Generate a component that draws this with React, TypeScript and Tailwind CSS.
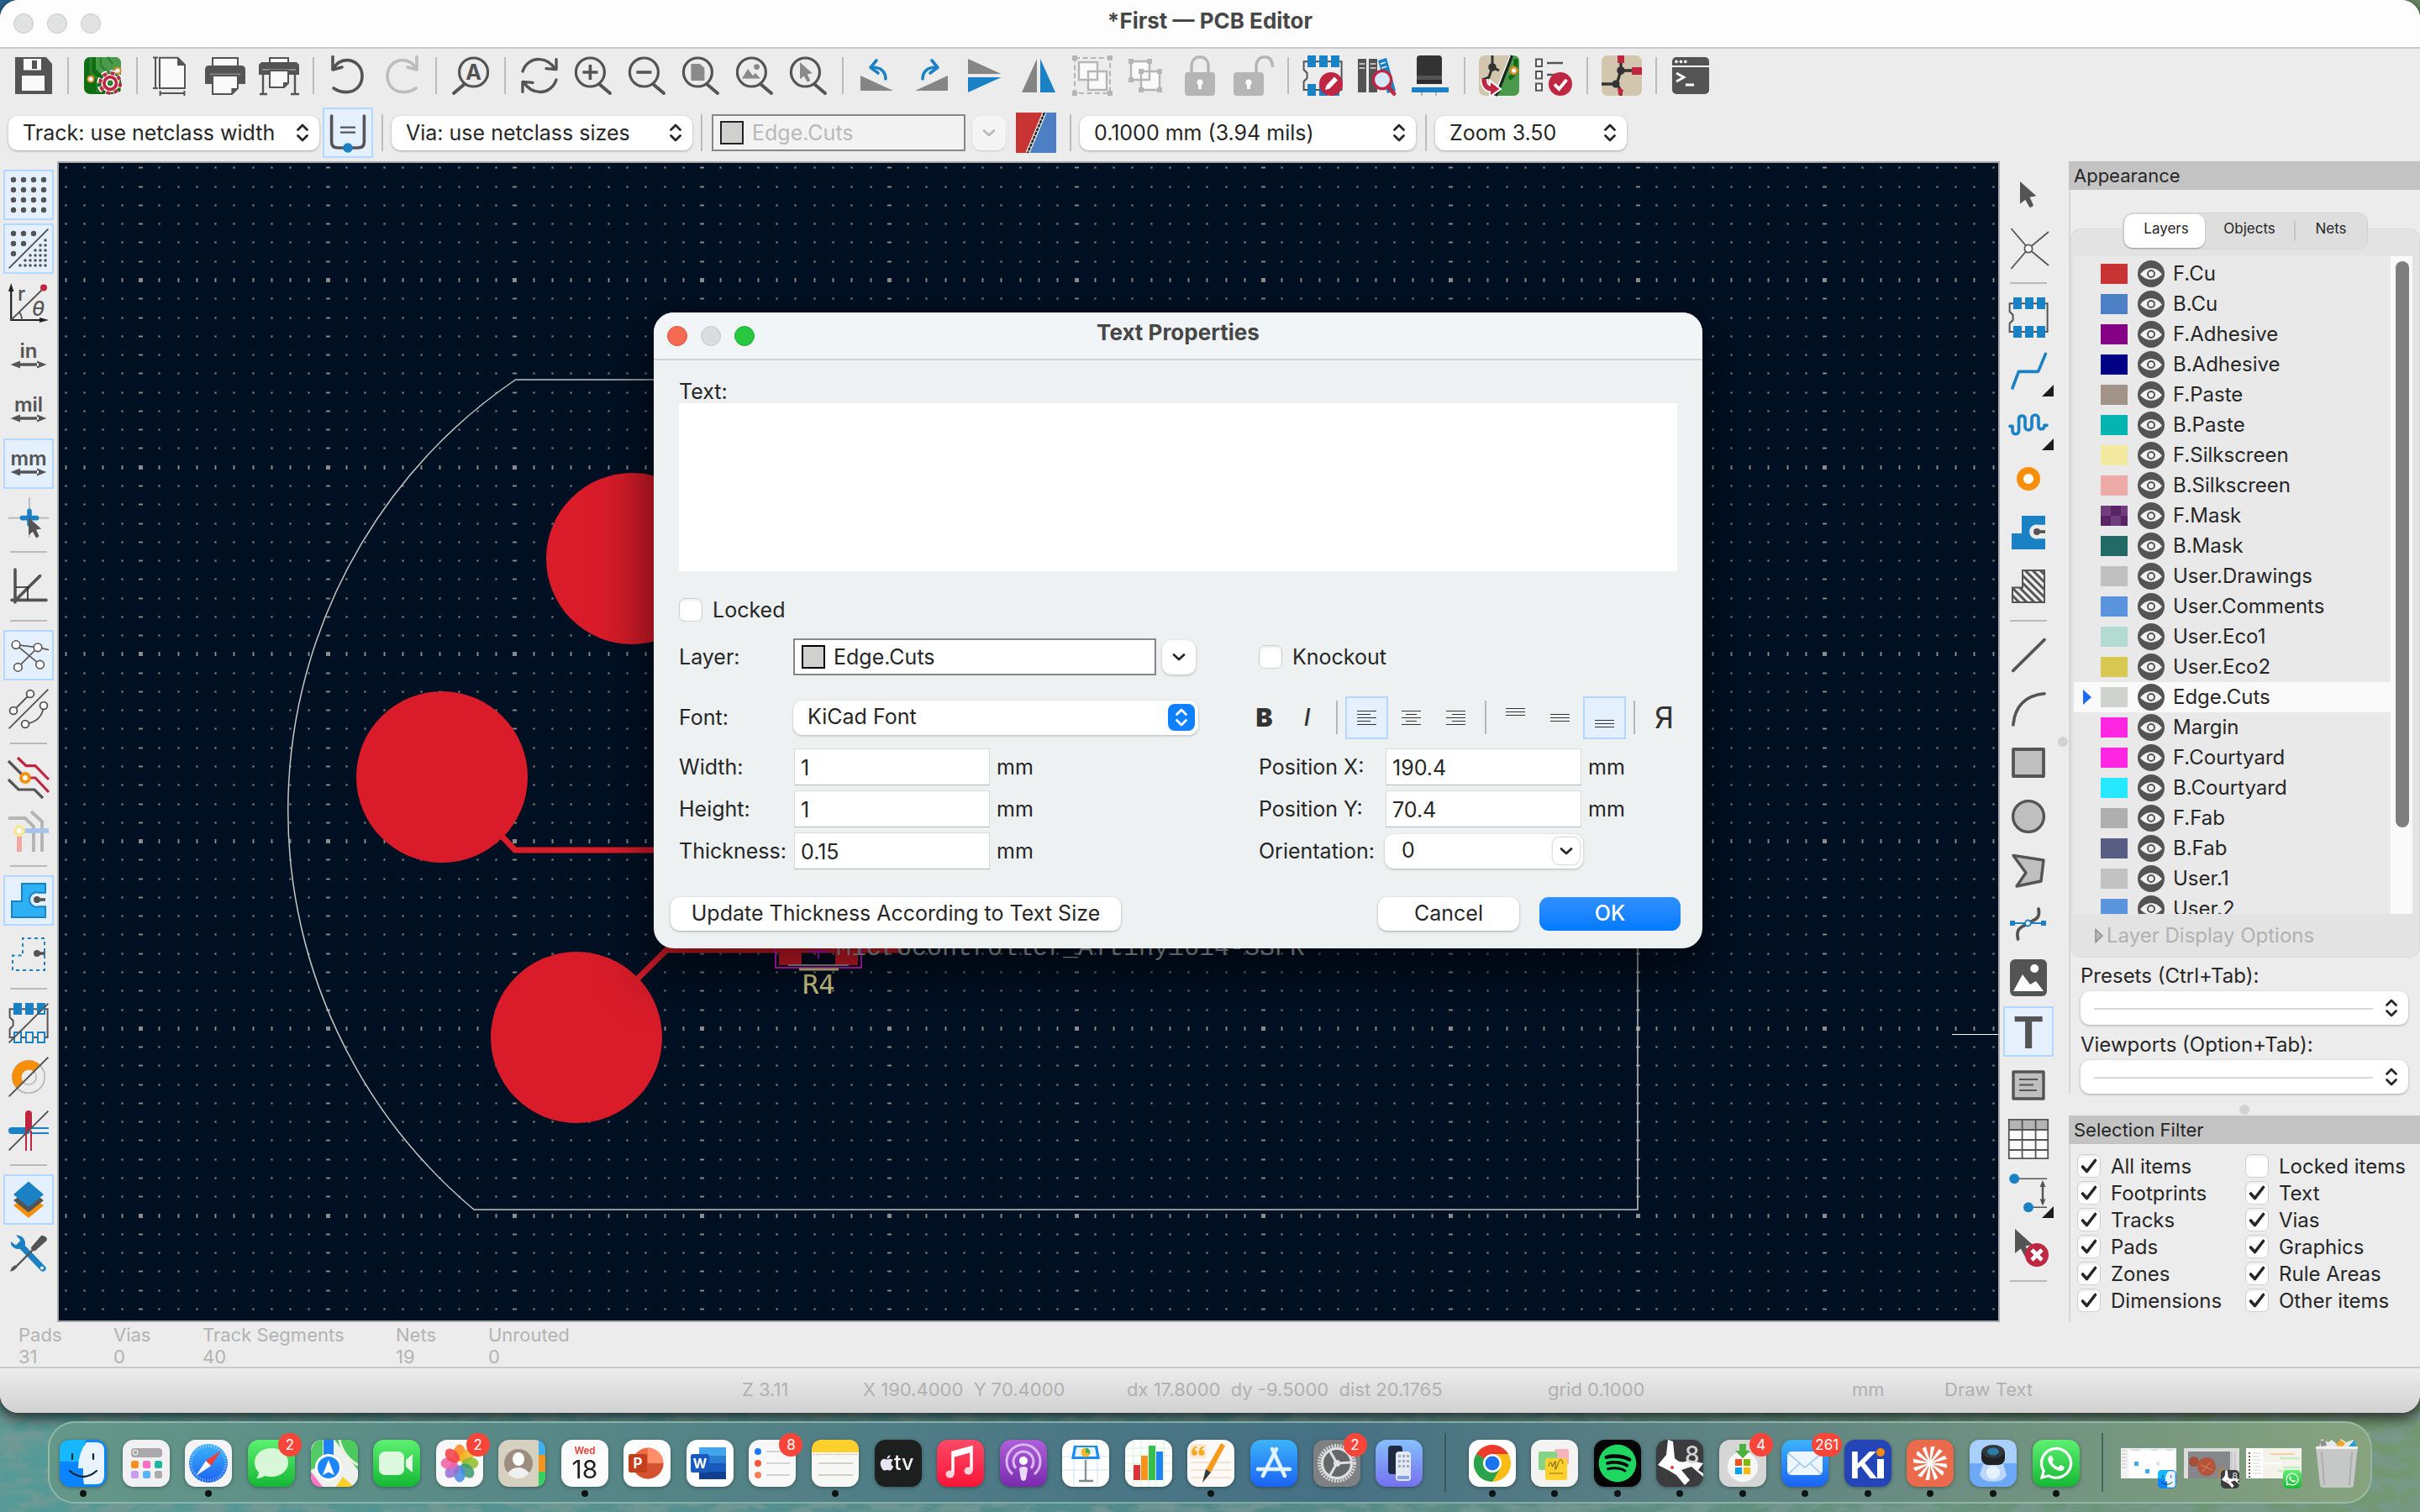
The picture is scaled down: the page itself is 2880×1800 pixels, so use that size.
import * as React from "react"
import { FaApple, FaSpotify, FaWhatsapp } from "react-icons/fa"

const DARK = "#545454"
const BLUE = "#1a81c4"
const RED = "#bf2641"
const GRAY = "#b5b5b5"

/* ---------- shared pieces ---------- */

function Glyph({ children }: { children: React.ReactNode }) {
  return (
    <svg viewBox="0 0 24 24" className="size-12 overflow-visible" fill="none" aria-hidden="true">
      {children}
    </svg>
  )
}

function UpDown({ className }: { className: string }) {
  return (
    <svg viewBox="0 0 16 24" className={className} fill="none" stroke="currentColor" strokeWidth="2.8" strokeLinecap="round" strokeLinejoin="round" aria-hidden="true">
      <path d="M2.500 8.500 8 3 13.500 8.500M2.500 15.500 8 21 13.500 15.500" />
    </svg>
  )
}

function Down({ className }: { className: string }) {
  return (
    <svg viewBox="0 0 16 16" className={className} fill="none" stroke="currentColor" strokeWidth="2.800" strokeLinecap="round" strokeLinejoin="round" aria-hidden="true">
      <path d="M2 5.500 8 11 14 5.500" />
    </svg>
  )
}

function PopUp({ label, value, className }: { label: string; value: string; className: string }) {
  return (
    <div className={`relative h-[41px] ${className}`}>
      <select aria-label={label} className="size-full appearance-none rounded-[11px] bg-white pl-[17px] pr-10 pt-0.5 text-[25px] text-[#262626] shadow-[0_1px_3px_rgba(0,0,0,0.3)] outline-none">
        <option>{value}</option>
      </select>
      <UpDown className="pointer-events-none absolute right-3 top-2 h-6 w-4 text-[#262626]" />
    </div>
  )
}

function Check({ label, checked }: { label: string; checked?: boolean }) {
  return (
    <label className="flex h-8 items-center gap-3 whitespace-nowrap">
      <span className="relative size-7 shrink-0">
        <input type="checkbox" defaultChecked={checked} className="peer block size-7 appearance-none rounded-[7px] border border-[#cfcfcf] bg-white shadow-[inset_0_2px_3px_rgba(0,0,0,0.08)]" />
        <svg viewBox="0 0 28 28" className="pointer-events-none absolute inset-0 hidden peer-checked:block" fill="none" stroke="#262626" strokeWidth="3.600" strokeLinecap="round" strokeLinejoin="round">
          <path d="M6.500 15 11.500 20.500 21.500 7.500" />
        </svg>
      </span>
      <span className="pt-0.5">{label}</span>
    </label>
  )
}

function Chip({ hollow, slash }: { hollow?: boolean; slash?: boolean }) {
  return (
    <>
      <path d="M.8 3.600H23.300V20.500H.8V15.500L2.800 13.500V10.500L.8 8.500Z" stroke={DARK} strokeWidth="1" />
      <path d="M3 0h5v7H3zM10 0h5v7h-5zM17 0h5v7h-5z" fill={BLUE} />
      {hollow ? (
        <path d="M3.500 17.500h4v6h-4zM10.500 17.500h4v6h-4zM17.500 17.500h4v6h-4z" stroke={BLUE} fill="#ececec" />
      ) : (
        <path d="M3 17h5v7H3zM10 17h5v7h-5zM17 17h5v7h-5z" fill={BLUE} />
      )}
      {hollow && <path d="M18.500 5.500 21 3v3h-3z" fill="#ececec" />}
      {slash && <path d="M.3 23.700 23.700.3" stroke={DARK} strokeWidth="1" />}
    </>
  )
}

const ZONE = "M2 22V12.500H8V2H22V7.400H18.200A4.300 4.300 0 1 0 18.200 15.600H22V22Z"

function Lens({ children, flip }: { children?: React.ReactNode; flip?: boolean }) {
  return (
    <>
      <g stroke={DARK} strokeWidth="1.600" strokeLinecap="round" transform={flip ? "matrix(-1 0 0 1 24 0)" : undefined}>
        <circle cx="10.200" cy="10" r="8.500" />
        <path d="M15.500 17 22 22.500" strokeWidth="2" />
      </g>
      {children}
    </>
  )
}

const CURSOR = "M0 0V14.500L3.400 11.800L6 16.500C6.500 17.300 9 16.200 8.500 15L6.300 10.200L10.500 9.400Z"

/* ---------- top toolbar ---------- */

type Tool = { name: string; icon: React.ReactNode; on?: boolean; more?: boolean } | null

const rotateArrow = (
  <>
    <path d="M2 12V21H21.500Z" fill="#858585" />
    <path d="M11.500 3 8 7.200 12.500 10.500" stroke={BLUE} strokeWidth="1.800" strokeLinejoin="round" strokeLinecap="round" />
    <path d="M8.500 7.200C14 6.800 17 9.500 17 14" stroke={BLUE} strokeWidth="1.800" strokeLinecap="round" />
  </>
)

const undo = <path d="M3 .8V8.500L8.500 7M3 8.300C5 4.800 7.800 2.800 11.300 2.800c5.300 0 9.200 4 9.200 9.400 0 5.600-4 9.600-9.400 9.600-2.900 0-5.500-.8-7.600-2.300" strokeWidth="1.800" strokeLinecap="round" strokeLinejoin="round" />

const TOP_TOOLS: Tool[] = [
  { name: "Save", icon: <><path d="M1 1H19.500L23 5V23H1Z" fill={DARK} /><path d="M6 2H16.500V8.800H6ZM5 12H18.500V21H5Z" fill="#fafafa" /><path d="M11 3h3v5h-3z" fill={DARK} /></> },
  null,
  { name: "Board setup", icon: <><rect x="1" y="1" width="22" height="22" rx="3.500" fill="#0f6d12" /><path d="M8 1v7l7 7h8V4.500A3.500 3.500 0 0 0 19.500 1Z" fill="#4b9a4b" /><path d="M5 1v9l4 4v8M11 1v5l6 6h6M15 1l3 4" stroke="#2c8430" strokeWidth="1.300" /><circle cx="5" cy="14" r="1.800" fill="#fff" stroke="#d68a2a" /><circle cx="21" cy="9" r="1.800" fill="#fff" stroke="#d68a2a" /><path d="M20 23v-2" stroke="#d68a2a" strokeWidth="2" /><circle cx="16.600" cy="16.500" r="6.400" stroke="#fff" strokeWidth="3" strokeDasharray="3 2" /><circle cx="16.600" cy="16.500" r="5" fill={RED} stroke="#fff" strokeWidth=".8" /><circle cx="16.600" cy="16.500" r="6" stroke={RED} strokeWidth="2" strokeDasharray="2.400 2.310" /><circle cx="16.600" cy="16.500" r="2.200" fill="#2c8430" stroke="#fff" /></> },
  null,
  { name: "Page settings", icon: <><path d="M5 1.400H15.800L20 5.600V19.500H5Z" fill="#fafafa" stroke={DARK} strokeWidth="1" /><path d="M15.500 1V6H20.400Z" fill={DARK} /><path d="M2.500 1.300V19.500M1 1.300H4M1 19.500H4M5.500 22.500H19.500M5.300 21V24M19.700 21V24" stroke={DARK} strokeWidth="1" /></> },
  { name: "Print", icon: <><path d="M4.500 1.500h15V7h-15z" fill="#fafafa" stroke={DARK} /><path d="M2.500 6H21.500Q24 6 24 8.500V17H0V8.500Q0 6 2.500 6Z" fill={DARK} /><path d="M3 11.300H21" stroke="#888" /><path d="M4.500 12h15v7.500L16 23H4.500Z" fill="#fafafa" stroke={DARK} /><path d="M15.700 23.300V19.500H19.600Z" fill={DARK} /></> },
  { name: "Plot", icon: <><path d="M6.500 1.500h11V5h-11z" fill="#fafafa" stroke={DARK} /><path d="M1.500 4H22.500L24 5.500V11.500H0V5.500Z" fill={DARK} /><path d="M2 8.500H22" stroke="#888" /><path d="M2.500 11V22.500M21.500 11V22.500M.5 23H5M19 23H24" stroke={DARK} strokeWidth="1.200" /><path d="M6.500 9h11v7.500L15 19H6.500Z" fill="#fafafa" stroke={DARK} /><path d="M14.500 19.300V16H17.600Z" fill={DARK} /></> },
  null,
  { name: "Undo", icon: <g stroke={DARK}>{undo}</g> },
  { name: "Redo", icon: <g stroke="#bdbdbd" transform="matrix(-1 0 0 1 24 0)">{undo}</g> },
  null,
  { name: "Find", icon: <Lens flip><text x="13.800" y="14.500" textAnchor="middle" fontFamily="Inter" fontWeight="700" fontSize="12.500" fill={DARK}>A</text></Lens> },
  null,
  { name: "Refresh", icon: <g stroke={DARK} strokeWidth="1.700" strokeLinecap="round" strokeLinejoin="round"><path d="M2 9.500C3.500 5 7.500 2 12 2.300c4 .2 7.300 2.500 9.300 5.700M22 2.300V8.300L16 7.800M22 14.500c-1.500 4.500-5.500 7.500-10 7.200-4-.2-7.300-2.500-9.300-5.700M2 21.700V15.700L8 16.200" /></g> },
  { name: "Zoom in", icon: <Lens><path d="M5.700 10H14.700M10.200 5.500V14.500" stroke={DARK} strokeWidth="1.800" /></Lens> },
  { name: "Zoom out", icon: <Lens><path d="M5.700 10H14.700" stroke={DARK} strokeWidth="1.800" /></Lens> },
  { name: "Zoom to page", icon: <Lens><path d="M6.200 5H11.500L14.200 7.500V15H6.200Z" fill="#8a8a8a" /></Lens> },
  { name: "Zoom to objects", icon: <Lens><path d="M4.500 13.800 8 8l3 4 1.500-1.500 3 3.300Z" fill="#8a8a8a" /><circle cx="13.300" cy="6.800" r="1.700" fill="#8a8a8a" /></Lens> },
  { name: "Zoom to selection", icon: <Lens><path d={CURSOR} transform="translate(7 4) scale(.7)" fill="#8a8a8a" /></Lens> },
  null,
  { name: "Rotate left", icon: rotateArrow },
  { name: "Rotate right", icon: <g transform="matrix(-1 0 0 1 24 0)">{rotateArrow}</g> },
  { name: "Flip vertically", icon: <><path d="M2 2 21.800 11H2Z" fill="#858585" /><path d="M2 22 21.800 13H2Z" fill={BLUE} /></> },
  { name: "Mirror horizontally", icon: <><path d="M11 2V22H2Z" fill="#858585" /><path d="M13 2V22H22Z" fill={BLUE} /></> },
  { name: "Group", icon: <g stroke={GRAY}><path d="M1.500 1.500h21v21h-21z" strokeDasharray="3 1.800" /><path d="M0 0h3v3H0zM21 0h3v3h-3zM0 21h3v3H0zM21 21h3v3h-3z" fill={GRAY} stroke="none" /><path d="M4 4h11v10.500H4zM9.500 9.500h11v11h-11z" fill="#fafafa" strokeWidth="1.200" /></g> },
  { name: "Ungroup", icon: <g stroke={GRAY}><path d="M3 3.500h11v11H3zM9 9.500h11v11H9z" fill="#fafafa" strokeWidth="1.200" /><path d="M1.500 2h3v3h-3zM12.500 2h3v3h-3zM1.500 13h3v3h-3zM7.500 8h3v3h-3zM18.500 8h3v3h-3zM7.500 19h3v3h-3zM18.500 19h3v3h-3z" fill={GRAY} stroke="none" /></g> },
  { name: "Lock", icon: <><path d="M7 11V6.500C7 3 9 .9 12 .9S17 3 17 6.500V11" stroke={GRAY} strokeWidth="1.700" /><rect x="3" y="10" width="18" height="14" rx="2" fill={GRAY} /><circle cx="12" cy="16" r="1.800" fill="#fafafa" /><path d="M11 16h2v4h-2z" fill="#fafafa" /></> },
  { name: "Unlock", icon: <><path d="M13.500 11V6.500C13.500 3 15.500.9 18.500.9S23.200 3 23.200 7" stroke={GRAY} strokeWidth="1.700" /><rect x="0" y="10" width="18" height="14" rx="2" fill={GRAY} /><circle cx="9" cy="16" r="1.800" fill="#fafafa" /><path d="M8 16h2v4H8z" fill="#fafafa" /></> },
  null,
  { name: "Footprint editor", icon: <><Chip /><circle cx="17" cy="17" r="7" fill={RED} /><path d="M13.500 20.500 14.300 17.700 19 12.800 21 14.800 16.200 19.700Z" fill="#fff" /></> },
  { name: "Footprint library browser", icon: <><path d="M1 2h5v20H1zM7.500 2h5v20h-5z" fill={DARK} /><path d="M1.800 5h3.400M1.800 7.500h3.400M8.300 5h3.400M8.300 7.500h3.400" stroke="#ddd" strokeWidth=".8" /><path d="M13 3 18 1.500 23.500 21 18.500 22.500Z" fill={BLUE} /><path d="M14.500 5l3-.9M15.200 7.500l3-.9" stroke="#fff" strokeWidth=".7" /><circle cx="15.500" cy="14.500" r="5.300" fill="#d6e8f8" stroke={RED} strokeWidth="1.700" /><path d="M19 18.500 22.500 22.800" stroke={RED} strokeWidth="2.400" strokeLinecap="round" /></> },
  { name: "3D viewer", icon: <><path d="M4 2Q4 0 6 0H17Q19 0 19 2V12H4Z" fill="#333" /><path d="M4 12H19V17H4Z" fill="#555" /><path d="M4 14.500h15V17H4z" fill="#2c2c2c" /><path d="M1 19H23V22H1Z" fill={BLUE} /><path d="M7 22v2M15.500 22v2" stroke="#b5b5b5" strokeWidth="1" /></> },
  null,
  { name: "Update from schematic", icon: <><rect x="0" y="0" width="24" height="24" rx="3.500" fill="#d2c7ae" /><path d="M20 0H20.500Q24 0 24 3.500V20.500Q24 24 20.500 24H11Z" fill="#4b9a4b" /><path d="M19 1 11 22M18 14l4-4V2" stroke="#0f6d12" strokeWidth="2.500" /><path d="M19.500 0 10 24" stroke="#222" strokeWidth="2" /><path d="M18.500 0 9.500 23" stroke="#fff" strokeWidth=".8" /><path d="M8 0V7l4 2M8 7 6 13 1 15" stroke="#333" strokeWidth="1.500" /><circle cx="8" cy="7" r="2.400" fill="#333" /><circle cx="20.800" cy="9" r="2" fill="#fff" stroke="#d68a2a" strokeWidth="1.400" /><path d="M3 14C3 18 5 20 8 20" stroke="#fff" strokeWidth="4.500" /><path d="M6.500 15 13 20 6.500 24.500Z" fill={RED} stroke="#fff" /><path d="M3 14C3 18 5 20 8 20" stroke={RED} strokeWidth="2.800" /></> },
  { name: "Design rules check", icon: <><path d="M2 2.300h3.500v4.200H2zM2 9.500h3.500v4.200H2zM2 16.700h3.500v4.200H2z" fill="#fafafa" stroke={DARK} /><path d="M8.500 4.500H18M8.500 11.500H14" stroke={DARK} strokeWidth="1.300" /><circle cx="16.500" cy="17" r="7" fill={RED} /><path d="M13 17.200 15.700 20 20.200 14.500" stroke="#fff" strokeWidth="1.900" /></> },
  null,
  { name: "Schematic editor", icon: <><rect width="24" height="24" rx="3.500" fill="#d2c7ae" /><path d="M11.500 4V9M11.500 9H18M11.500 9 9 17H0M9 17l2.500 4v3" stroke="#333" strokeWidth="1.700" /><path d="M9.500 0h4v4.500h-4zM18 7h6v4.500h-6zM9.500 19l3.500 1.500-1 3.500-2-.5z" fill={RED} /><circle cx="11.500" cy="9" r="2.400" fill="#333" /><circle cx="8.500" cy="17" r="2.300" fill="#333" /></> },
  null,
  { name: "Scripting console", icon: <><rect x="1" y="1" width="22" height="22" rx="2.500" fill={DARK} /><path d="M1 6.500H23" stroke="#fff" strokeWidth="1" /><g fill="#fff"><circle cx="3.500" cy="3.700" r=".9" /><circle cx="6.200" cy="3.700" r=".9" /><circle cx="8.900" cy="3.700" r=".9" /></g><path d="M3.500 10.500 8 13 3.500 15.500M9 17.500h5" stroke="#fff" strokeWidth="1.400" /></> },
]

/* ---------- left toolbar ---------- */

function Units({ text }: { text: string }) {
  return (
    <>
      <text x="12" y="13" textAnchor="middle" fontFamily="Inter" fontWeight="600" fontSize="12" fill={DARK}>{text}</text>
      <path d="M1.300 17 7 14.800V19.200ZM22.700 17 17 14.800V19.200ZM6 16.100h12v1.800H6z" fill={DARK} />
    </>
  )
}

const coarse = [3, 9, 15, 21]
const fine = [7, 10, 13, 16, 19, 22]

const LEFT_TOOLS: Tool[] = [
  { name: "Show grid", on: true, icon: coarse.flatMap((y) => coarse.map((x) => <circle key={`${x}-${y}`} cx={x} cy={y} r="1.600" fill={DARK} />)) },
  { name: "Grid overrides", on: true, icon: <><path d="M.3 23.700 23.700.3" stroke={DARK} />{coarse.flatMap((y) => coarse.filter((x) => x + y < 20).map((x) => <circle key={`${x}-${y}`} cx={x} cy={y} r="1.600" fill={DARK} />))}{fine.flatMap((y) => fine.filter((x) => x + y > 28).map((x) => <circle key={`f${x}-${y}`} cx={x} cy={y} r=".9" fill={DARK} />))}</> },
  { name: "Polar coordinates", icon: <><path d="M1.600 5V22.500H19" stroke="#222" strokeWidth="1.100" /><path d="M1.600.5 0 5.500H3.200ZM24 22.500 18.500 21V24Z" fill="#222" /><path d="M1.600 22.500 21 3.500M6.500 18C7.500 19 8 20.500 8 22.500" stroke={DARK} strokeWidth=".9" /><circle cx="21" cy="3.200" r="2" fill={RED} /><text x="5.500" y="11" fontFamily="Inter" fontSize="12" fontWeight="500" fill={DARK}>r</text><text x="14" y="20" fontFamily="Inter" fontSize="12" fontStyle="italic" fontWeight="500" fill={DARK}>θ</text></> },
  { name: "Inches", icon: <Units text="in" /> },
  { name: "Mils", icon: <Units text="mil" /> },
  { name: "Millimeters", on: true, icon: <Units text="mm" /> },
  { name: "Full-window crosshairs", icon: <><path d="M0 12.300H24M12.500 0V24" stroke={GRAY} strokeWidth=".8" /><path d="M8.200 12.300H16.800M12.500 8.200V16" stroke={BLUE} strokeWidth="2.800" strokeLinecap="round" /><path d={CURSOR} transform="translate(12 12) scale(.72)" fill={DARK} /></> },
  null,
  { name: "Constrain to 45 degrees", icon: <><path d="M4 2V21.500M2 20.200H22.500M4.500 20 18.800 5.800" stroke={DARK} strokeWidth="1.800" strokeLinecap="round" /><path d="M4.500 12.500h7V20" stroke="#222" strokeWidth=".8" /></> },
  null,
  { name: "Show ratsnest", on: true, icon: <g stroke={DARK} strokeWidth=".8"><path d="M4.500 5.800 17.500 7.400 24 8.800M4.500 5.800 18.800 17.600M17.500 7.400 5.700 19.200" /><g fill="#fff"><circle cx="4.500" cy="5.800" r="2.400" /><circle cx="17.500" cy="7.400" r="2.400" /><circle cx="5.700" cy="19.200" r="2.400" /><circle cx="18.800" cy="17.600" r="2.400" /></g></g> },
  { name: "Curved ratsnest", icon: <g stroke={DARK} strokeWidth=".9"><path d="M.3 23.700 23.700.3M3 13 13 3M10 21C17 20 20.500 16 21 10" /><g fill="#fff"><circle cx="13" cy="3" r="2.200" /><circle cx="3" cy="13" r="2.200" /><circle cx="21" cy="10" r="2.200" /><circle cx="10" cy="21" r="2.200" /></g></g> },
  null,
  { name: "Net highlighting", icon: <g strokeWidth="1.600"><path d="M0 2 9 11M0 13 6 19H15.500L20.500 24" stroke={DARK} /><path d="M5.500 0 10.500 4.800H16L24 13M12 12H16L24 20.500" stroke={RED} /><circle cx="10" cy="12" r="2.500" fill="#fff" stroke="#f6900b" strokeWidth="1.900" /></g> },
  { name: "High contrast", icon: <g strokeWidth="2"><path d="M0 4H10L15 9V24M13.500 0 20 6V24" stroke={GRAY} /><path d="M8 11.500H24" stroke="#a3c4e8" strokeWidth="2.800" /><path d="M6.500 13V24" stroke="#f0aaa5" strokeWidth="3" /><circle cx="6.500" cy="11.500" r="2.500" fill="#fff" stroke="#f5e79d" /></g> },
  null,
  { name: "Filled zones", on: true, icon: <><path d={ZONE} fill="#2eb0f5" stroke={BLUE} strokeWidth="1" /><path d="M17 11.500H22" stroke={DARK} strokeWidth="1.800" /><circle cx="17" cy="11.500" r="2" fill={DARK} /></> },
  { name: "Zone outlines", icon: <><path d="M2.500 21.500V12.800H8.500V2.500H21.500V21.500Z" stroke={BLUE} strokeWidth="1" strokeDasharray="2 2" /><path d="M17 11.500H22" stroke={DARK} strokeWidth="1.800" /><circle cx="17" cy="11.500" r="2" fill={DARK} /></> },
  null,
  { name: "Pads as outlines", icon: <Chip hollow slash /> },
  { name: "Vias as outlines", icon: <><g stroke={GRAY} strokeWidth=".8"><circle cx="12" cy="12" r="9.600" /><circle cx="12" cy="12" r="4.600" /></g><path d="M5 19A9.900 9.900 0 0 1 19 5L15.300 8.700A4.700 4.700 0 0 0 8.700 15.300Z" fill="#f6900b" /><path d="M.3 23.700 23.700.3" stroke={DARK} /></> },
  { name: "Tracks as outlines", icon: <><path d="M13 10.500H24M13 13.500H24" stroke={BLUE} /><path d="M2 12H11" stroke={BLUE} strokeWidth="4" strokeLinecap="round" /><path d="M10.500 12V24M13.500 12V24" stroke={RED} /><path d="M10 2Q10 0 12 0T14 2V11L10 14Z" fill={RED} /><path d="M.3 23.700 23.700.3" stroke={DARK} /></> },
  null,
  { name: "Layers manager", on: true, icon: <><path d="M3 15.500 12 9.500 21 15.500 12 23Z" fill="#f6900b" /><path d="M3 12.500 12 6 21 12.500 12 19.700Z" fill={DARK} /><path d="M3 9 12 1.200 21 9 12 16.500Z" fill={BLUE} /></> },
  { name: "Properties manager", icon: <><path d="M7 7 20.500 21" stroke={BLUE} strokeWidth="3.600" strokeLinecap="round" /><path d="M1.500 5C1 8 4.500 10.500 8 9L10 7C10.500 4 8 1 4.500 1.300L7 4 6.500 6.500 4 7Z" fill={BLUE} /><circle cx="20" cy="20.700" r="1" fill="#fff" /><path d="M3 21.500 15 9.500" stroke={DARK} strokeWidth="1.200" /><path d="M1 23 2 20.500 4 19l1.200 1.200L3.500 22ZM13.500 8.500 19.500 1.500Q21 1 23 3L22.700 4.500 16 10.500Q13.500 11 13.500 8.500Z" fill={DARK} /></> },
]

/* ---------- right toolbar ---------- */

const RIGHT_TOOLS: Tool[] = [
  { name: "Select", icon: <path d={CURSOR} transform="translate(7 4) scale(.92)" fill={DARK} /> },
  { name: "Local ratsnest", icon: <g stroke={DARK} strokeWidth=".9"><path d="M1.700 0 12 12 24 2M1.700 24 12 12 24 22" /><circle cx="12" cy="12" r="2.300" fill="#fff" /></g> },
  null,
  { name: "Place footprint", icon: <Chip /> },
  { name: "Route tracks", more: true, icon: <path d="M2.500 22 6.200 12.200H17.800L22.200 1.700" stroke={BLUE} strokeWidth="1.800" strokeLinecap="round" strokeLinejoin="round" /> },
  { name: "Tune length", more: true, icon: <path d="M1 12.700H2.500V15.500A1.900 1.900 0 0 0 6.300 15.500V8A1.900 1.900 0 0 1 10 8V13A2 2 0 0 0 14 13V8A2 2 0 0 1 18 8V13A1.800 1.800 0 0 0 21.500 13V12.200H23" stroke={BLUE} strokeWidth="1.800" strokeLinecap="round" strokeLinejoin="round" /> },
  { name: "Place via", icon: <circle cx="12" cy="12" r="5" stroke="#f6900b" strokeWidth="4" fill="#fff" /> },
  { name: "Draw zone", icon: <><path d={ZONE} fill={BLUE} /><path d="M17 11.500H22" stroke={DARK} strokeWidth="1.800" /><circle cx="17" cy="11.500" r="2" fill={DARK} /></> },
  { name: "Draw rule area", icon: <><clipPath id="rule-area"><path d="M2 22V12.500H8.500V2H22V22Z" /></clipPath><path d="M2.500 21.500V12.800H8.500V2.500H21.500V21.500Z" stroke={DARK} strokeWidth="1" /><g clipPath="url(#rule-area)" stroke={DARK} strokeWidth="1.500"><path d="M-6 9 12 27M-2 8.500 16 26.500M2 8 20 26M6 7.500 24 25.500M8 5 26 23M10 2.500 28 20.500M14 2 32 20M18 1.500 36 19.500" /></g></> },
  null,
  { name: "Draw line", icon: <path d="M2.900 21.200 21.500 2.800" stroke={DARK} strokeWidth="1.800" strokeLinecap="round" /> },
  { name: "Draw arc", icon: <path d="M2.900 21.500C4 10.500 10 4 21.500 2.900" stroke={DARK} strokeWidth="1.800" strokeLinecap="round" /> },
  { name: "Draw rectangle", icon: <path d="M3 4h18v16H3z" fill="#bfbfbf" stroke={DARK} strokeWidth="1.900" strokeLinejoin="round" /> },
  { name: "Draw circle", icon: <circle cx="12" cy="12" r="9.200" fill="#bfbfbf" stroke={DARK} strokeWidth="1.700" /> },
  { name: "Draw polygon", icon: <path d="M3 3.200 21 6 19.500 18.500 5 21.500 10.500 13.500Z" fill="#bfbfbf" stroke={DARK} strokeWidth="1.700" strokeLinejoin="round" /> },
  { name: "Draw bezier", icon: <><path d="M5.800 21C4 13 10 13.500 12 11.500S19.500 10 18 3" stroke={DARK} strokeWidth="1.900" strokeLinecap="round" /><path d="M2 11.500H21" stroke={BLUE} /><path d="M1 10h3v3H1zM19.500 10h3v3h-3z" fill={BLUE} /><circle cx="11.700" cy="11.500" r="1.700" fill="#fff" stroke={BLUE} /></> },
  { name: "Place image", icon: <><rect x="1" y="1" width="22" height="22" rx="3" fill={DARK} /><circle cx="15.600" cy="6.500" r="2.500" fill="#fff" /><path d="M3 20 8.500 10 13 16 16.500 14 21 20Z" fill="#fff" /></> },
  { name: "Place text", on: true, icon: <text x="12" y="22" textAnchor="middle" fontFamily="Liberation Sans" fontWeight="700" fontSize="28" fill={DARK}>T</text> },
  { name: "Place text box", icon: <><path d="M3 4h18v16H3z" fill="#bfbfbf" stroke={DARK} strokeWidth="1.700" strokeLinejoin="round" /><path d="M6.500 8.500h11M6.500 11.700h8.500M6.500 15h10.500" stroke={DARK} strokeWidth="1" /></> },
  { name: "Place table", icon: <><path d="M.5.5h23v23H.5z" fill="#fafafa" /><path d="M.5.5h23V6H.5z" fill={GRAY} /><path d="M.4.4h23.200v23.200H.4zM8.300 0V24M16.300 0V24M0 6.500H24M0 12.500H24M0 18.500H24" stroke={DARK} strokeWidth=".9" /></> },
  { name: "Place dimension", more: true, icon: <><path d="M3.500 3.600H23M12 20.600H23" stroke={DARK} strokeWidth=".8" /><path d="M20.500 6V18.500" stroke={DARK} strokeWidth="1.200" /><path d="M20.500 4.500 18.800 8.500H22.200ZM20.500 19.800 18.800 15.800H22.200Z" fill={DARK} /><circle cx="3.600" cy="3.600" r="3" fill={BLUE} /><circle cx="12" cy="20.600" r="3" fill={BLUE} /></> },
  { name: "Delete", icon: <><path d={CURSOR} transform="translate(4 1.500)" fill={DARK} /><circle cx="17" cy="17" r="7" fill={RED} /><path d="M14 14 20 20M20 14 14 20" stroke="#fff" strokeWidth="2.400" /></> },
  null,
]

function SideTools({ tools, label }: { tools: Tool[]; label: string }) {
  return (
    <div role="toolbar" aria-label={label} className="flex flex-col pl-1 pt-2">
      {tools.map((tool, i) =>
        tool ? (
          <button key={tool.name} aria-label={tool.name} className={`relative my-0.5 flex size-[60px] shrink-0 items-center justify-center border-2 ${tool.on ? "border-[#b3d7ff] bg-[#e5f0fe]" : "border-transparent"}`}>
            <Glyph>{tool.icon}</Glyph>
            {tool.more && (
              <svg viewBox="0 0 14 14" className="absolute -bottom-0.5 -right-0.5 size-3.5">
                <path d="M14 0V14H0Z" fill="#1c1c1c" />
              </svg>
            )}
          </button>
        ) : (
          <div key={i} className="flex h-[18px] w-[60px] shrink-0 items-center px-2">
            <div className="h-0.5 w-full bg-[#b9b9b9]" />
          </div>
        )
      )}
    </div>
  )
}

/* ---------- board canvas ---------- */

// every tenth row and column is drawn heavier; each mark has a dim edge and a bright core
function buildGrid() {
  const step = 22.270
  let edge = ""
  let core = ""
  const box = (x: number, y: number, w: number, h: number) => `M${x - (w >> 1)} ${y - (h >> 1)}h${w}v${h}h-${w}z`
  for (let r = -6; r < 56; r++) {
    const y = Math.round(333 + r * step)
    const majorRow = r % 10 === 0
    for (let c = -4; c < 100; c++) {
      const x = Math.round(167 + c * step)
      const majorCol = c % 10 === 0
      edge += box(x, y, majorCol ? 5 : 3, majorRow ? 5 : 3)
      core += box(x, y, majorCol ? 5 : 1, majorRow ? 5 : 1)
    }
  }
  return { edge, core }
}
const GRID = buildGrid()

function Board() {
  return (
    <svg viewBox="70 194 2308 1378" preserveAspectRatio="xMinYMin slice" className="absolute inset-0 size-full" role="img" aria-label="Board">
      <path d={GRID.edge} fill="#40474e" shapeRendering="crispEdges" />
      <path d={GRID.core} fill="#8b8d8d" shapeRendering="crispEdges" />
      <path d="M800 452H613.500A621 621 0 0 0 564 1440H1949V1100" fill="none" stroke="#c4c6c2" strokeWidth="1.500" />
      <g fill="#da1c2a">
        <circle cx="752" cy="665" r="102" />
        <circle cx="526" cy="925" r="102" />
        <circle cx="686" cy="1235" r="102" />
        <path d="M927 1120h27v29h-27zM994 1120h27v29h-27z" />
      </g>
      <g fill="none" stroke="#da1c2a" strokeWidth="7">
        <path d="M590 988 613 1012H790" />
        <path d="M750 1174 793 1131H1074" />
      </g>
      <path d="M923 1110V1152H1025V1110" fill="none" stroke="#d01bd0" strokeWidth="2" />
      <path d="M938 1149H1010" stroke="#999" strokeWidth="2" />
      <path d="M974 1120V1141M962 1133H986" stroke="#c012d0" strokeWidth="2" />
      <path d="M951 1154H998" stroke="#ddd48a" strokeWidth="3" />
      <text x="955" y="1183" fontFamily="DejaVu Sans Mono" fontSize="32" fill="#ddd48a">R4</text>
      <text x="1553" y="1137" textAnchor="end" fontFamily="Liberation Mono" fontSize="30" fill="#a4a8aa">Microcontroller_ATtiny1614-SSFR</text>
      <path d="M2323 1231.500H2400" stroke="#fff" strokeWidth="1" />
    </svg>
  )
}

/* ---------- appearance panel ---------- */

const LAYERS = [
  ["F.Cu", "#c83434"], ["B.Cu", "#4d7fc4"], ["F.Adhesive", "#840084"], ["B.Adhesive", "#000084"],
  ["F.Paste", "#a19387"], ["B.Paste", "#04b4b0"], ["F.Silkscreen", "#f3e9a1"], ["B.Silkscreen", "#ecaba7"],
  ["F.Mask", "#5a2366"], ["B.Mask", "#216a66"], ["User.Drawings", "#c0c0c0"], ["User.Comments", "#5994dc"],
  ["User.Eco1", "#b4dbd2"], ["User.Eco2", "#d8c852"], ["Edge.Cuts", "#d0d2cd"], ["Margin", "#ff26e2"],
  ["F.Courtyard", "#ff26e2"], ["B.Courtyard", "#26e9ff"], ["F.Fab", "#afafaf"], ["B.Fab", "#585d84"],
  ["User.1", "#c2c2c2"], ["User.2", "#5994dc"],
]

const FILTERS: [string, boolean][] = [
  ["All items", true], ["Locked items", false], ["Footprints", true], ["Text", true], ["Tracks", true], ["Vias", true],
  ["Pads", true], ["Graphics", true], ["Zones", true], ["Rule Areas", true], ["Dimensions", true], ["Other items", true],
]

function Eye() {
  return (
    <svg viewBox="0 0 32 32" className="size-8" aria-hidden="true">
      <circle cx="16" cy="16" r="16" fill={DARK} />
      <path d="M3 16.500C7 11.500 11 9.300 16 9.300S25 11.500 29 16.500C25 20.700 21 22.800 16 22.800S7 20.700 3 16.500Z" fill="#f2f2f2" />
      <circle cx="16" cy="16" r="4" fill="#f2f2f2" stroke={DARK} strokeWidth="2" />
    </svg>
  )
}

function Blank({ label }: { label: string }) {
  return (
    <label className="block px-3.5">
      <span className="block h-7 whitespace-nowrap leading-7">{label}</span>
      <span className="relative mt-1 block h-10">
        <select className="size-full appearance-none rounded-[11px] bg-white shadow-[0_1px_3px_rgba(0,0,0,0.3)]">
          <option aria-label="None" />
        </select>
        <span className="pointer-events-none absolute left-4 right-[42px] top-5 h-0.5 bg-[#d8d8d8]" />
        <UpDown className="pointer-events-none absolute right-3 top-2 h-6 w-4" />
      </span>
    </label>
  )
}

function Panel() {
  return (
    <aside className="flex w-[418px] shrink-0 flex-col text-[24px] text-[#262626]">
      <h2 className="h-[34px] bg-[#c3c3c3] pl-1.5 text-[22px] leading-[34px]">Appearance</h2>
      <div className="flex min-h-0 flex-1 flex-col border-l-2 border-[#d6d6d6]">
        <div className="mt-[46px] flex min-h-0 flex-1 flex-col rounded-xl border border-[#d9d9d9] bg-[#e3e3e3]">
          <div role="tablist" className="-mt-5 flex h-11 shrink-0 items-center self-center rounded-xl border border-[#d2d2d2] bg-[#dedede] p-px text-[17px]">
            <button role="tab" aria-selected="true" className="h-10 w-24 rounded-[10px] bg-white pb-1 pl-1 shadow-[0_1px_2px_rgba(0,0,0,0.3)]">Layers</button>
            <button role="tab" className="h-10 w-[106px] pb-1">Objects</button>
            <div className="h-6 w-0.5 bg-[#c6c6c6]" />
            <button role="tab" className="h-10 w-[84px] pb-1">Nets</button>
          </div>
          <div className="mt-2 flex min-h-0 flex-1 overflow-hidden pl-[3px] pr-2">
            <ul className="flex-1 overflow-hidden bg-[#e9e9e9] pt-[3px]">
              {LAYERS.map(([name, color]) => (
                <li key={name} className={`flex h-9 items-center ${name === "Edge.Cuts" ? "bg-[#fafafa]" : ""}`}>
                  <div className="w-8 pl-[11px]">
                    {name === "Edge.Cuts" && (
                      <svg viewBox="0 0 10 18" className="h-[18px] w-2.5"><path d="M0 0 10 9 0 18Z" fill="#1b6bfb" /></svg>
                    )}
                  </div>
                  {name === "F.Mask" ? (
                    <svg viewBox="0 0 32 24" className="h-6 w-8"><path d="M0 0h32v24H0z" fill="#5a2366" /><path d="M0 0h12v12H0zM24 0h8v12h-8zM12 12h12v12H12z" fill="#6e3f7c" /></svg>
                  ) : (
                    <div className="h-6 w-8" style={{ backgroundColor: color }} />
                  )}
                  <button aria-label={`Toggle ${name}`} className="ml-3"><Eye /></button>
                  <span className="ml-2.5">{name}</span>
                </li>
              ))}
            </ul>
            <div className="w-[26px] bg-[#fafafa] pl-1.5 pt-1.5">
              <div className="h-[674px] w-4 rounded-full bg-[#7e7e7e]" />
            </div>
          </div>
          <button className="flex h-[51px] shrink-0 items-center gap-1 pl-7 text-[#b1b1b1]">
            <svg viewBox="0 0 10 18" className="h-[18px] w-2.5"><path d="M1 1.500 9 9 1 16.500Z" fill="#b9b9b9" stroke="#8a8a8a" strokeWidth="1.400" /></svg>
            Layer Display Options
          </button>
        </div>
        <div className="mt-2 flex shrink-0 flex-col gap-2.5 -ml-0.5">
          <Blank label="Presets (Ctrl+Tab):" />
          <Blank label="Viewports (Option+Tab):" />
        </div>
      </div>
      <div className="flex h-[26px] shrink-0 items-center justify-center pt-3">
        <div className="size-3 rounded-full bg-[#d2d2d2]" />
      </div>
      <h2 className="h-[34px] shrink-0 bg-[#c3c3c3] pl-1.5 text-[22px] leading-[34px]">Selection Filter</h2>
      <div className="grid shrink-0 grid-cols-[200px_1fr] border-l-2 border-[#d6d6d6] py-2.5 pl-2">
        {FILTERS.map(([name, on]) => (
          <Check key={name} label={name} checked={on} />
        ))}
      </div>
    </aside>
  )
}

/* ---------- dialog ---------- */

function Field({ id, label, value, right }: { id: string; label: string; value: string; right?: boolean }) {
  return (
    <div className="flex h-11 items-center">
      <label htmlFor={id} className={right ? "w-[151px] pt-0.5" : "w-[137px] pt-0.5"}>{label}</label>
      <input id={id} defaultValue={value} className="h-11 w-[233px] border border-[#d9dbdb] border-b-[#b4b6b6] bg-white px-[7px] pt-0.5 outline-none" />
      <span className="ml-2 pt-0.5">mm</span>
    </div>
  )
}

function FormatButton({ name, on, children }: { name: string; on?: boolean; children: React.ReactNode }) {
  return (
    <button aria-label={name} className={`flex size-[51px] shrink-0 items-center justify-center border-2 ${on ? "border-[#b3d7ff] bg-[#e5f0fe]" : "border-transparent"}`}>
      {children}
    </button>
  )
}

function Lines({ d }: { d: string }) {
  return (
    <svg viewBox="0 0 24 24" className="size-6" stroke="#333" strokeWidth="1" shapeRendering="crispEdges"><path d={d} /></svg>
  )
}

const Rule = () => <div className="mx-[9px] h-10 w-0.5 shrink-0 bg-[#b5b7b7]" />

function TextProperties() {
  return (
    <div role="dialog" aria-label="Text Properties" className="absolute left-[778px] top-[372px] w-[1248px] overflow-hidden rounded-[24px] bg-[#edf1f2] text-[25px] text-[#262626] shadow-[0_24px_60px_10px_rgba(0,0,0,0.5)]">
      <header className="relative flex h-[57px] items-center gap-4 border-b-2 border-[#cfd3d4] bg-[#f1f5f8] pl-4">
        <button aria-label="Close" className="size-6 rounded-full border border-[#e0503c] bg-[#f46a52]" />
        <button aria-label="Minimize" className="size-6 rounded-full border border-[#c4c6c7] bg-[#dadcdd]" />
        <button aria-label="Zoom" className="size-6 rounded-full border border-[#1fae38] bg-[#27c840]" />
        <h1 className="pointer-events-none absolute inset-x-0 top-1.5 text-center text-[26px] font-bold leading-9 text-[#474747]">Text Properties</h1>
      </header>
      <div className="pb-[21px] pl-[30px] pr-[30px]">
        <label htmlFor="text" className="block pt-[23px] leading-7">Text:</label>
        <textarea id="text" className="block h-[200px] w-full resize-none bg-white outline-none" />
        <div className="mt-[30px]"><Check label="Locked" /></div>
        <div className="mt-[18px] flex">
          <div className="flex w-[690px] flex-col">
            <div className="flex h-11 items-center">
              <span className="w-[136px] pt-0.5">Layer:</span>
              <div className="flex h-11 w-[432px] items-center gap-2.5 border-2 border-[#868888] bg-white pl-2">
                <div className="size-7 border-2 border-black bg-[#d0d0ce]" />
                <span className="pt-0.5">Edge.Cuts</span>
              </div>
              <button aria-label="Choose layer" className="ml-[7px] flex h-[41px] w-10 items-center justify-center rounded-[11px] bg-white shadow-[0_1px_3px_rgba(0,0,0,0.25)]">
                <Down className="size-4" />
              </button>
            </div>
            <div className="mt-6 flex h-[52px] items-center">
              <label htmlFor="font" className="w-[136px] pt-0.5">Font:</label>
              <div className="relative h-[41px] w-[482px]">
                <select id="font" className="size-full appearance-none rounded-[11px] bg-white pl-[17px] shadow-[0_1px_3px_rgba(0,0,0,0.25)]">
                  <option>KiCad Font</option>
                </select>
                <span className="pointer-events-none absolute right-1 top-1 flex size-8 items-center justify-center rounded-lg bg-[#0f80ff] text-white">
                  <UpDown className="h-6 w-4" />
                </span>
              </div>
            </div>
            <div className="mt-[11px] flex flex-col gap-1.5">
              <Field id="width" label="Width:" value="1" />
              <Field id="height" label="Height:" value="1" />
              <Field id="thickness" label="Thickness:" value="0.15" />
            </div>
          </div>
          <div className="flex flex-1 flex-col">
            <div className="flex h-11 items-center"><Check label="Knockout" /></div>
            <div className="-ml-[19px] -mr-5 mt-6 flex h-[52px] items-center">
              <FormatButton name="Bold"><span className="font-[Inter] text-[30px] font-black text-[#333]">B</span></FormatButton>
              <FormatButton name="Italic"><span className="font-[Inter] text-[28px] font-medium italic text-[#333]">I</span></FormatButton>
              <Rule />
              <div className="flex gap-0.5">
                <FormatButton name="Align left" on><Lines d="M0 4.500H23M0 8.500H16M0 12.500H23M0 16.500H16M0 20.500H23" /></FormatButton>
                <FormatButton name="Align center"><Lines d="M0 4.500H23M5 8.500H18M0 12.500H23M5 16.500H18M0 20.500H23" /></FormatButton>
                <FormatButton name="Align right"><Lines d="M0 4.500H23M7 8.500H23M0 12.500H23M7 16.500H23M0 20.500H23" /></FormatButton>
              </div>
              <Rule />
              <div className="flex gap-0.5">
                <FormatButton name="Align top"><Lines d="M0 1.500H23M0 5.500H23M0 9.500H23" /></FormatButton>
                <FormatButton name="Align middle"><Lines d="M0 8.500H23M0 12.500H23M0 16.500H23" /></FormatButton>
                <FormatButton name="Align bottom" on><Lines d="M0 15.500H23M0 19.500H23M0 23.500H23" /></FormatButton>
              </div>
              <Rule />
              <FormatButton name="Mirrored"><span className="text-[36px] text-[#333]">Я</span></FormatButton>
            </div>
            <div className="mt-[11px] flex flex-col gap-1.5">
              <Field id="pos-x" label="Position X:" value="190.4" right />
              <Field id="pos-y" label="Position Y:" value="70.4" right />
              <div className="flex h-11 items-center">
                <label htmlFor="orientation" className="w-[150px] whitespace-nowrap pt-0.5">Orientation:</label>
                <div className="relative h-[41px] w-[236px]">
                  <select id="orientation" className="size-full appearance-none rounded-[11px] bg-white pl-5 shadow-[0_1px_3px_rgba(0,0,0,0.25)]">
                    <option>0</option>
                  </select>
                  <span className="pointer-events-none absolute right-1 top-1 flex size-8 items-center justify-center rounded-lg shadow-[0_0_3px_rgba(0,0,0,0.35)]">
                    <Down className="size-4" />
                  </span>
                </div>
              </div>
            </div>
          </div>
        </div>
        <div className="-ml-2.5 -mr-1 mt-[33px] flex h-10">
          <button className="w-[536px] rounded-[11px] bg-white shadow-[0_1px_3px_rgba(0,0,0,0.3)]">Update Thickness According to Text Size</button>
          <button className="ml-auto w-[168px] rounded-[11px] bg-white shadow-[0_1px_3px_rgba(0,0,0,0.3)]">Cancel</button>
          <button className="ml-6 w-[168px] rounded-[11px] bg-linear-to-b from-[#2e90ff] to-[#007aff] font-medium text-white">OK</button>
        </div>
      </div>
    </div>
  )
}

/* ---------- dock ---------- */

type App = { name: string; art: React.ReactNode; running?: boolean; badge?: string }

const tile = (fill: string) => <rect width="56" height="56" rx="13" fill={fill} />

const petals = ["#f98b1b", "#f3b51c", "#8fbd2c", "#3f9b72", "#4a90e2", "#9b6fd1", "#f062a8", "#f2444a"]

const finderArt = (
  <>
    {tile("#0a84ff")}
    <path d="M0 26V13Q0 0 13 0H31L27 26Z" fill="#16b8fb" />
    <path d="M32 3H44Q53 3 53 13V43Q53 53 43 53H29Q27 44 28 34H22Q22 16 32 3Z" fill="#e8f3fb" />
    <path d="M15 17v6M40 17v6M12 37Q28 51 44 37" stroke="#123" strokeWidth="2.200" strokeLinecap="round" fill="none" />
  </>
)

const rhinoArt = (
  <>
    {tile("#3c3c3e")}
    <path d="M14 0 20 2 22 22Q30 30 38 24L56 28 50 36 56 40V44L42 32 30 36 40 48 34 54 24 42 14 36 2 30 12 18Z" fill="#fff" />
    <circle cx="19" cy="33" r="2" fill="#e33" />
    <text x="34" y="28" fontFamily="Inter" fontSize="28" fontWeight="500" fill="#d4d4d4">8</text>
  </>
)

const whatsappArt = <>{tile("url(#green)")}<FaWhatsapp x="6" y="6" size={44} color="#fff" /></>

const APPS: App[] = [
  { name: "Finder", running: true, art: finderArt },
  { name: "Apps", art: <>{tile("#f1f1f3")}<rect x="10" y="10" width="37" height="11" rx="4" fill="#a9a9ab" /><circle cx="15" cy="15" r="3" fill="none" stroke="#fff" />{["#f78f1e", "#fb6fc0", "#1cb6a3", "#c89af0", "#58b5fb", "#acacac"].map((c, i) => <rect key={c} x={10 + (i % 3) * 14} y={i < 3 ? 25 : 37} width="9" height="9" rx="2.500" fill={c} />)}</> },
  { name: "Safari", running: true, art: <>{tile("#f4f4f6")}<circle cx="28" cy="28" r="23" fill="url(#sky)" /><circle cx="28" cy="28" r="20.500" fill="none" stroke="#fff" strokeWidth="3" strokeDasharray=".7 2.500" opacity=".7" /><path d="M43 13 31 31 25 25Z" fill="#fb3b30" /><path d="M13 43 31 31 25 25Z" fill="#fff" /></> },
  { name: "Messages", badge: "2", art: <>{tile("url(#green)")}<path d="M28 10C39 10 48 17 48 27S39 44 28 44Q24 44 20 43 16 46 10 46 13 43 13 39 8 34 8 27C8 17 17 10 28 10Z" fill="#d8f7d8" /></> },
  { name: "Maps", art: <>{tile("#eef0ec")}<path d="M28 0H43Q56 0 56 13V36Z" fill="#4cc95f" /><path d="M0 13Q2 2 12 0H14V30L0 36Z" fill="#53cb65" /><path d="M34 0Q38 20 56 30" stroke="#e8f3e4" strokeWidth="3" fill="none" /><path d="M15 0H27V30H15Z" fill="#1c82f5" /><path d="M0 38 14 56H13Q0 56 0 43Z" fill="#fb75c6" /><path d="M30 56 38 44 50 55 43 56Z" fill="#fbcf28" /><circle cx="21" cy="33" r="14.500" fill="#1b87fb" stroke="#fff" strokeWidth="3" /><path d="M21 24 28 42 21 38.500 14 42Z" fill="#fff" /></> },
  { name: "FaceTime", art: <>{tile("url(#green)")}<rect x="7" y="14" width="30" height="28" rx="7" fill="#dcf9dd" /><path d="M39 24 47 17V39L39 32Z" fill="#e8fbe8" /></> },
  { name: "Photos", badge: "2", art: <>{tile("#f8f8f8")}{petals.map((c, i) => <ellipse key={c} cx="28" cy="15.500" rx="7" ry="10" fill={c} opacity=".88" transform={`rotate(${i * 45} 28 28)`} />)}</> },
  { name: "Contacts", art: <>{tile("#d5d0c0")}<path d="M43 0Q56 0 56 13V18H48V0Z" fill="#3cb0f2" /><path d="M48 18h8v20h-8z" fill="#f7941d" /><path d="M48 38h8v5Q56 56 43 56H48Z" fill="#35d060" /><circle cx="24" cy="28" r="17" fill="#9c8d80" /><ellipse cx="24" cy="23" rx="7" ry="8" fill="#fff" /><path d="M11 40Q16 33 24 33T37 40Q31 46 24 46T11 40Z" fill="#f0f0f0" /></> },
  { name: "Calendar", running: true, art: <>{tile("#fbfbfb")}<text x="28" y="17" textAnchor="middle" fontFamily="Inter" fontSize="11.500" fontWeight="600" fill="#f03a30">Wed</text><text x="28" y="46" textAnchor="middle" fontFamily="Inter" fontSize="30" fill="#222">18</text></> },
  { name: "PowerPoint", art: <>{tile("#fff")}<circle cx="29" cy="28" r="18.500" fill="#ed6c47" /><path d="M29 9.500A18.500 18.500 0 0 1 47.500 28H29Z" fill="#ff8f6b" /><path d="M47.500 28A18.500 18.500 0 0 1 29 46.500 18.500 18.500 0 0 1 12 35L29 28Z" fill="#d35230" /><rect x="6" y="17" width="22" height="22" rx="2.500" fill="#c43e1c" /><text x="17" y="34" textAnchor="middle" fontFamily="Inter" fontSize="17" fontWeight="700" fill="#fff">P</text></> },
  { name: "Word", art: <>{tile("#fff")}<rect x="15" y="9" width="32" height="38" rx="3" fill="#2b7cd3" /><path d="M15 9h32v10H15z" fill="#41a5ee" /><path d="M15 28h32v10H15z" fill="#185abd" /><path d="M15 38h32v9H15z" fill="#103f91" /><rect x="5" y="17" width="22" height="22" rx="2.500" fill="#185abd" /><text x="16" y="34" textAnchor="middle" fontFamily="Inter" fontSize="16" fontWeight="700" fill="#fff">W</text></> },
  { name: "Reminders", badge: "8", art: <>{tile("#f8f8f8")}<circle cx="11" cy="14" r="4" fill="#1b7bff" /><circle cx="11" cy="28" r="4" fill="#f2543d" /><circle cx="11" cy="42" r="4" fill="#f58057" /><path d="M21 14H49M21 28H49M21 42H49" stroke="#c9c9c9" strokeWidth="1.500" /></> },
  { name: "Notes", running: true, art: <>{tile("#f7f7f5")}<path d="M0 15V13Q0 0 13 0H43Q56 0 56 13V15Z" fill="#fdd02b" /><path d="M2 17.500H54" stroke="#b0a890" strokeDasharray="1.500 1.500" /><path d="M8 28H49M8 42H49" stroke="#cfcfcf" strokeWidth="1.800" /></> },
  { name: "TV", art: <>{tile("#1d1f1e")}<FaApple x="4" y="17" size={21} color="#e9e4f4" /><text x="23" y="36" fontFamily="Inter" fontSize="25" fontWeight="500" fill="#f3f3f3">tv</text></> },
  { name: "Music", art: <>{tile("url(#music)")}<path d="M19 41V15L41 9V37" stroke="#fff" strokeWidth="3.500" fill="none" /><path d="M19 14 41 8V15L19 21Z" fill="#fff" /><ellipse cx="15.500" cy="41" rx="5" ry="4.500" fill="#fbd3da" /><ellipse cx="37.500" cy="37" rx="5" ry="4.500" fill="#fbd3da" /></> },
  { name: "Podcasts", art: <>{tile("url(#podcast)")}<g fill="none" stroke="#dab8f3" strokeWidth="3"><path d="M15 41A20 20 0 1 1 41 41" /><path d="M19 34A12 12 0 1 1 37 34" /></g><circle cx="28" cy="25" r="5" fill="#fff" /><path d="M23 35Q23 32 28 32T33 35L31 47Q28 51 25 47Z" fill="#ead8f7" /></> },
  { name: "Keynote", art: <>{tile("#fff")}<path d="M0 20H56M0 36H56M14 0V56M42 0V56" stroke="#bcd9f5" strokeWidth=".8" /><path d="M14 7H42L45 23H11Z" fill="#1c8cf5" /><path d="M17 9H39L41 20H15Z" fill="#eaf4fd" /><circle cx="28" cy="15" r="5.500" fill="#f6b52b" /><path d="M28 9.500A5.500 5.500 0 0 1 33 17L28 15Z" fill="#38b55a" /><path d="M28 24V48" stroke="#8b949c" strokeWidth="2.500" /><path d="M20 49H37" stroke="#7d858c" strokeWidth="2.500" /></> },
  { name: "Numbers", art: <>{tile("#fff")}<path d="M0 10H56M0 19H56M0 28H56M0 37H56M10 0V56M19 0V56M28 0V56M37 0V56M46 0V56" stroke="#c5ecc5" strokeWidth=".8" /><path d="M10 30h8v18h-8z" fill="#e0313a" /><path d="M19 19h8v29h-8z" fill="#f5921e" /><path d="M28 7h8v41h-8z" fill="#35c04d" /><path d="M37 14h8v34h-8z" fill="#2183ee" /></> },
  { name: "Pages", running: true, art: <>{tile("#fcfbf9")}<path d="M4 27H52M4 36H52M4 45H52" stroke="#f3c9a9" strokeWidth="1" /><rect x="3" y="5" width="20" height="17" fill="#fdebd6" /><g fill="#f7a81f"><circle cx="8.500" cy="15.500" r="3.300" /><circle cx="17" cy="15.500" r="3.300" /><path d="M5.200 15.500Q5 9 11 7.500L11.500 9Q8 10.500 8 14ZM13.700 15.500Q13.500 9 19.500 7.500L20 9Q16.500 10.500 16.500 14Z" /></g><path d="M40 4 45 7 28 39 22 36Z" fill="#f59a1a" /><path d="M22 35 28 39 18 51Z" fill="#33383f" /></> },
  { name: "App Store", art: <>{tile("url(#sky)")}<path d="M26 11 41 43M31 11 15 43M9 35H47" stroke="#e3f2ff" strokeWidth="4.500" strokeLinecap="round" /></> },
  { name: "System Settings", badge: "2", art: <>{tile("#7f8082")}<circle cx="28" cy="28" r="21" fill="none" stroke="#d6d6d6" strokeWidth="4" strokeDasharray="2 1.400" /><circle cx="28" cy="28" r="17.500" fill="#66676a" stroke="#e0e0e0" strokeWidth="3" /><path d="M28 28 44 27M28 28 20 14M28 28 20 42" stroke="#e0e0e0" strokeWidth="3" /><circle cx="28" cy="28" r="4" fill="#e0e0e0" /></> },
  { name: "iPhone Mirroring", art: <>{tile("url(#mirror)")}<rect x="15" y="7" width="17" height="34" rx="4" fill="#1e2a40" /><rect x="24" y="14" width="18" height="35" rx="4" fill="#e4e9f5" />{[18, 24, 30].map((y) => <path key={y} d={`M27 ${y}h3v3h-3zM32 ${y}h3v3h-3zM37 ${y}h3v3h-3z`} fill="#a3aabd" />)}<path d="M26 43h14v4H26z" fill="#7fa4e4" /></> },
]

const RECENT: App[] = [
  { name: "Chrome", running: true, art: <>{tile("#fff")}<circle cx="28" cy="28" r="22" fill="#fbbc16" /><path d="M28 28 9 17A22 22 0 0 1 47 17H28Z" fill="#ea3b2e" /><path d="M8.900 17A22 22 0 0 0 28 50L37.500 33.500 28 28Z" fill="#2ba24c" /><circle cx="28" cy="28" r="11" fill="#fff" /><circle cx="28" cy="28" r="8.500" fill="#1b73f0" /></> },
  { name: "Stickies", running: true, art: <>{tile("#f3f3f1")}<rect x="28" y="11" width="17" height="19" rx="2" fill="#f6b3bb" /><rect x="9" y="14" width="22" height="22" rx="2" fill="#85d385" /><rect x="17" y="22" width="26" height="26" rx="3" fill="#fdd02b" /><path d="M21 32Q22 26 23.500 27T25 31 27.500 28 29 31 32 29 38 29M22 40H38" stroke="#8a7420" strokeWidth="1.200" fill="none" /></> },
  { name: "Spotify", running: true, art: <>{tile("#050505")}<FaSpotify x="5" y="5" size={46} color="#1ed760" /></> },
  { name: "Rhino 8", running: true, art: rhinoArt },
  { name: "Microsoft AutoUpdate", badge: "4", running: true, art: <>{tile("#d6d6d6")}<circle cx="28" cy="32" r="18" fill="#f7f7f7" /><path d="M24 5h8v8h5l-9 9-9-9h5z" fill="#4caf3a" /><path d="M19 23h8v8h-8z" fill="#f25022" /><path d="M29 23h8v8h-8z" fill="#7fba00" /><path d="M19 33h8v8h-8z" fill="#00a4ef" /><path d="M29 33h8v8h-8z" fill="#ffb900" /></> },
  { name: "Mail", badge: "261", running: true, art: <>{tile("url(#sky)")}<rect x="7" y="14" width="42" height="28" rx="5" fill="#eef6fd" /><path d="M8 16 28 33 48 16M8 41 22 28M48 41 34 28" stroke="#9cc6ef" strokeWidth="1.600" fill="none" /></> },
  { name: "KiCad", running: true, art: <>{tile("#2445b8")}<text x="6" y="46" fontFamily="Liberation Sans" fontSize="46" fontWeight="700" fill="#fff">K</text><path d="M39 23h8v23h-8z" fill="#fff" /><circle cx="43" cy="15" r="5" fill="#f58a0b" /></> },
  { name: "Claude", running: true, art: <>{tile("#ec6a4c")}{[0, 30, 60, 90, 120, 150, 180, 210, 240, 270, 300, 330].map((a) => <path key={a} d="M28 28 26.500 9 30 8Z" fill="#fff" stroke="#fff" strokeWidth="1.200" transform={`rotate(${a + 8} 28 28)`} />)}</> },
  { name: "Preview", running: true, art: <>{tile("#6ea9f8")}<path d="M0 28V13Q0 0 13 0H43Q56 0 56 13V28Z" fill="#a9cffb" /><path d="M18 22 12 42Q16 50 28 50T44 42L38 22Z" fill="#cfe2ff" opacity=".8" /><circle cx="28" cy="39" r="8" fill="#e8f1ff" /><rect x="14" y="8" width="28" height="22" rx="8" fill="#1f2124" /><ellipse cx="28" cy="14" rx="13" ry="8" fill="#33373b" /><ellipse cx="28" cy="14" rx="7" ry="4.500" fill="#2d7ba8" /></> },
  { name: "WhatsApp", running: true, art: whatsappArt },
]

function DockApp({ app }: { app: App }) {
  return (
    <div className="relative flex flex-1 flex-col items-center pt-5">
      <button aria-label={app.name} className="relative size-14">
        <svg viewBox="0 0 56 56" className="size-14 drop-shadow-[0_1px_2px_rgba(0,0,0,0.35)]">{app.art}</svg>
        {app.badge && (
          <span className="absolute -top-2 left-9 flex h-7 min-w-7 items-center justify-center rounded-full bg-[#f8453a] px-1 text-[17px] leading-7 text-white">{app.badge}</span>
        )}
      </button>
      {app.running && <span className="mt-1 size-2 rounded-full bg-[#0d1413]" />}
    </div>
  )
}

function Thumb({ name, children, badge }: { name: string; children: React.ReactNode; badge: React.ReactNode }) {
  return (
    <div className="flex flex-1 justify-center pt-[30px]">
      <button aria-label={name} className="relative h-9 w-[66px]">
        <svg viewBox="0 0 66 36" className="h-9 w-[66px]">{children}</svg>
        <svg viewBox="0 0 56 56" className="absolute -bottom-3 right-0 size-[22px]">{badge}</svg>
      </button>
    </div>
  )
}

const DockRule = () => (
  <div className="flex w-9 shrink-0 items-center justify-center">
    <div className="h-[70px] w-0.5 bg-[#2f4f4c]/70" />
  </div>
)

function Dock() {
  return (
    <nav aria-label="Dock" className="mx-[57px] mt-2.5 flex h-[98px] rounded-[32px] border-2 border-[#a5cdbd]/60 bg-linear-to-r from-[#649788] via-[#467084] via-55% to-[#86a37d] px-[3px]">
      <svg width="0" height="0" className="absolute">
        <defs>
          <linearGradient id="green" x2="0" y2="1"><stop stopColor="#5df070" /><stop offset="1" stopColor="#14b834" /></linearGradient>
          <linearGradient id="sky" x2="0" y2="1"><stop stopColor="#3db3fa" /><stop offset="1" stopColor="#1a63f3" /></linearGradient>
          <linearGradient id="music" x2="0" y2="1"><stop stopColor="#fd4a68" /><stop offset="1" stopColor="#fa1436" /></linearGradient>
          <linearGradient id="podcast" x2="0" y2="1"><stop stopColor="#ad5fd8" /><stop offset="1" stopColor="#7a2bae" /></linearGradient>
          <linearGradient id="mirror" x2="0" y2="1"><stop stopColor="#86c0fd" /><stop offset="1" stopColor="#7570ee" /></linearGradient>
        </defs>
      </svg>
      <div className="flex grow-22 basis-0">{APPS.map((app) => <DockApp key={app.name} app={app} />)}</div>
      <DockRule />
      <div className="flex grow-10 basis-0">{RECENT.map((app) => <DockApp key={app.name} app={app} />)}</div>
      <DockRule />
      <div className="flex grow-4 basis-0">
        <Thumb name="Finder window" badge={finderArt}>
          <path d="M0 0h66v36H0z" fill="#f3f3f3" /><path d="M9 3h55v33H9z" fill="#fff" />
          <path d="M1 3h6M1 7h6M1 11h6M1 15h6M1 19h6M1 23h6M12 2h10M36 2h8M54 2h8" stroke="#c5c5c5" /><path d="M16 16h5v5h-5zM29 25h5v5h-5z" fill="#3fa6f0" /><path d="M42 16h4v5h-4z" fill="#e4e4e4" />
        </Thumb>
        <Thumb name="Rhino window" badge={rhinoArt}>
          <path d="M0 0h66v36H0z" fill="#dcdcdc" /><path d="M5 4h50v32H5z" fill="#85878b" /><circle cx="12" cy="16" r="6" fill="#a64e3a" /><circle cx="27" cy="22" r="11" fill="#b4543a" /><path d="M20 20l14 6M22 28l10-12" stroke="#e08a5a" /><path d="M42 24v11M46 22v12" stroke="#c9832d" strokeWidth="1.500" /><path d="M57 4v24M61 4v24" stroke="#b5b5b5" />
        </Thumb>
        <Thumb name="WhatsApp window" badge={whatsappArt}>
          <path d="M0 0h66v36H0z" fill="#f5f2ec" /><path d="M0 0h20v36H0z" fill="#fff" />
          <path d="M4 5v30" stroke="#7c5b4e" strokeWidth="2" strokeDasharray="2 2" /><path d="M8 6h10M8 10h8M8 14h10M8 18h8M8 22h10M8 26h8M8 30h10" stroke="#cfcfcf" /><path d="M29 7h28" stroke="#f1d3a2" strokeWidth="2" /><path d="M40 12h24M44 23h20M38 27h26" stroke="#c3eebd" strokeWidth="2.500" /><path d="M22 18h20" stroke="#fff" strokeWidth="2.500" />
        </Thumb>
        <div className="flex flex-1 justify-center pt-[18px]">
          <button aria-label="Trash" className="h-[60px] w-[52px]">
            <svg viewBox="0 0 52 60" className="h-[60px] w-[52px]">
              <path d="M5 10 8 1 16 5 20 2 27 8 31 1 37 5 46 2 48 11Z" fill="#e9e9e9" /><path d="M25 9 30 2 36 6 33 10Z" fill="#f5a623" /><path d="M40 10 47 2 49 10Z" fill="#2a9fd6" /><path d="M6 4 12 2 14 9 7 10Z" fill="#8f8f8f" />
              <path d="M1 10H51L46 56Q45.500 59 42 59H10Q6.500 59 6 56Z" fill="#c6c7c7" /><path d="M1 10H51L50.700 13H1.300Z" fill="#f2f2f2" /><path d="M8 16 11 56M44 16 41 56" stroke="#adaeae" strokeWidth="2" />
            </svg>
          </button>
        </div>
      </div>
    </nav>
  )
}

/* ---------- window ---------- */

const STATS = [["Pads", "31"], ["Vias", "0"], ["Track Segments", "40"], ["Nets", "19"], ["Unrouted", "0"]]

const Divider = () => <div className="h-11 w-0.5 shrink-0 bg-[#bcbcbc]" />

export default function App() {
  return (
    <div className="relative flex h-screen flex-col overflow-hidden bg-linear-to-r from-[#559a96] via-[#52898a] to-[#749870] font-[Inter,sans-serif]">
      <svg className="absolute inset-x-0 bottom-0 h-[140px] w-full opacity-70" aria-hidden="true">
        <filter id="water">
          <feTurbulence type="fractalNoise" baseFrequency="0.030 0.070" numOctaves="4" />
          <feColorMatrix values="0 0 0 0 0.200  0 0 0 0 0.320  0 0 0 0 0.300  3.500 0 0 0 -1.300" />
        </filter>
        <rect width="100%" height="100%" filter="url(#water)" />
      </svg>
      <div className="absolute left-0 top-0 size-10 bg-[#2b6f9e]" />

      <div className="relative flex min-h-0 flex-1 flex-col overflow-hidden rounded-[22px] bg-[#ececec] shadow-[0_4px_18px_2px_rgba(0,0,0,0.75)]">
        <header className="relative flex h-[58px] shrink-0 items-center gap-4 border-b-2 border-[#c9c9c9] bg-[#fdfdfd] pl-4">
          <button aria-label="Close" className="size-6 rounded-full border border-[#c6c7c7] bg-[#e1e3e2]" />
          <button aria-label="Minimize" className="size-6 rounded-full border border-[#c6c7c7] bg-[#e1e3e2]" />
          <button aria-label="Zoom" className="size-6 rounded-full border border-[#c6c7c7] bg-[#e1e3e2]" />
          <h1 className="pointer-events-none absolute inset-x-0 top-[7px] text-center text-[26px] font-bold leading-9 text-[#474747]">*First — PCB Editor</h1>
        </header>

        <div role="toolbar" aria-label="Main" className="flex h-16 shrink-0 items-center pl-2">
          {TOP_TOOLS.map((tool, i) =>
            tool ? (
              <button key={tool.name} aria-label={tool.name} className="flex size-16 shrink-0 items-center justify-center"><Glyph>{tool.icon}</Glyph></button>
            ) : (
              <div key={i} className="flex w-[18px] shrink-0 justify-center"><Divider /></div>
            )
          )}
        </div>

        <div className="flex h-[70px] shrink-0 items-center pl-2.5 pt-0.5">
          <PopUp label="Track width" value="Track: use netclass width" className="w-[370px]" />
          <button aria-label="Use existing track width" className="ml-1 mr-2.5 flex size-[60px] items-center justify-center border-2 border-[#b3d7ff] bg-[#e5f0fe]">
            <Glyph><path d="M2.300 2V17.500Q2.300 21 6 21H18Q21.700 21 21.700 17.500V2" stroke={DARK} strokeWidth="1.800" strokeLinecap="round" /><path d="M7.500 8.800h9M7.500 11.800h9" stroke={DARK} strokeWidth="1.200" /><circle cx="12" cy="21" r="2.900" fill={BLUE} /></Glyph>
          </button>
          <Divider />
          <PopUp label="Via size" value="Via: use netclass sizes" className="ml-2.5 mr-2.5 w-[358px]" />
          <Divider />
          <div className="ml-[11px] flex h-11 w-[302px] items-center gap-2.5 border-2 border-[#868686] bg-[#f3f3f3] pl-2 text-[25px] text-[#b9b9b9]">
            <div className="size-7 border-2 border-[#222] bg-[#d0d0ce]" />
            <span className="pt-0.5">Edge.Cuts</span>
          </div>
          <button aria-label="Choose layer" disabled className="ml-2 mr-3 flex h-[41px] w-10 items-center justify-center rounded-[11px] bg-[#f5f5f5] text-[#b9b9b9] shadow-[0_1px_2px_rgba(0,0,0,0.15)]"><Down className="size-4" /></button>
          <button aria-label="Layer pair" className="mr-4">
            <Glyph><path d="M0 0H24V24H0Z" fill="#4d7fc4" /><path d="M0 0H17L7 24H0Z" fill="#c83434" /><path d="M17 0 7 24" stroke="#eee" strokeWidth="2.400" /><path d="M17 0 7 24" stroke="#222" strokeWidth="1.200" strokeDasharray="2 .5" /></Glyph>
          </button>
          <Divider />
          <PopUp label="Grid" value="0.1000 mm (3.94 mils)" className="ml-2.5 mr-[11px] w-[400px]" />
          <Divider />
          <PopUp label="Zoom" value="Zoom 3.50" className="ml-2.5 w-[228px]" />
        </div>

        <main className="flex min-h-0 flex-1">
          <div className="w-[68px] shrink-0"><SideTools tools={LEFT_TOOLS} label="View options" /></div>
          <div className="relative flex-1 overflow-hidden border-2 border-[#a9a9a9] bg-[#001023]"><Board /></div>
          <div className="relative w-[82px] shrink-0">
            <SideTools tools={RIGHT_TOOLS} label="Tools" />
            <div className="absolute right-px top-1/2 size-3 -translate-y-1/2 rounded-full bg-[#d2d2d2]" />
          </div>
          <Panel />
        </main>

        <dl className="grid h-[53px] shrink-0 grid-cols-[113px_106px_230px_110px_1fr] pl-[22px] pt-0.5 text-[22px] leading-[26px] text-[#b3b3b3]">
          {STATS.map(([name, value]) => (
            <div key={name}><dt>{name}</dt><dd>{value}</dd></div>
          ))}
        </dl>

        <footer className="grid h-[55px] shrink-0 grid-cols-[883fr_144fr_314fr_501fr_362fr_110fr_566fr] items-center whitespace-pre border-t-2 border-[#c6c9c9] bg-linear-to-b from-[#ececec] to-[#d1d1d1] pb-0.5 text-[22px] text-[#b0b0b0]">
          <span />
          <span>Z 3.11</span>
          <span>X 190.4000  Y 70.4000</span>
          <span>dx 17.8000  dy -9.5000  dist 20.1765</span>
          <span>grid 0.1000</span>
          <span>mm</span>
          <span>Draw Text</span>
        </footer>
      </div>

      <div className="relative h-[118px] shrink-0"><Dock /></div>

      <TextProperties />
    </div>
  )
}
